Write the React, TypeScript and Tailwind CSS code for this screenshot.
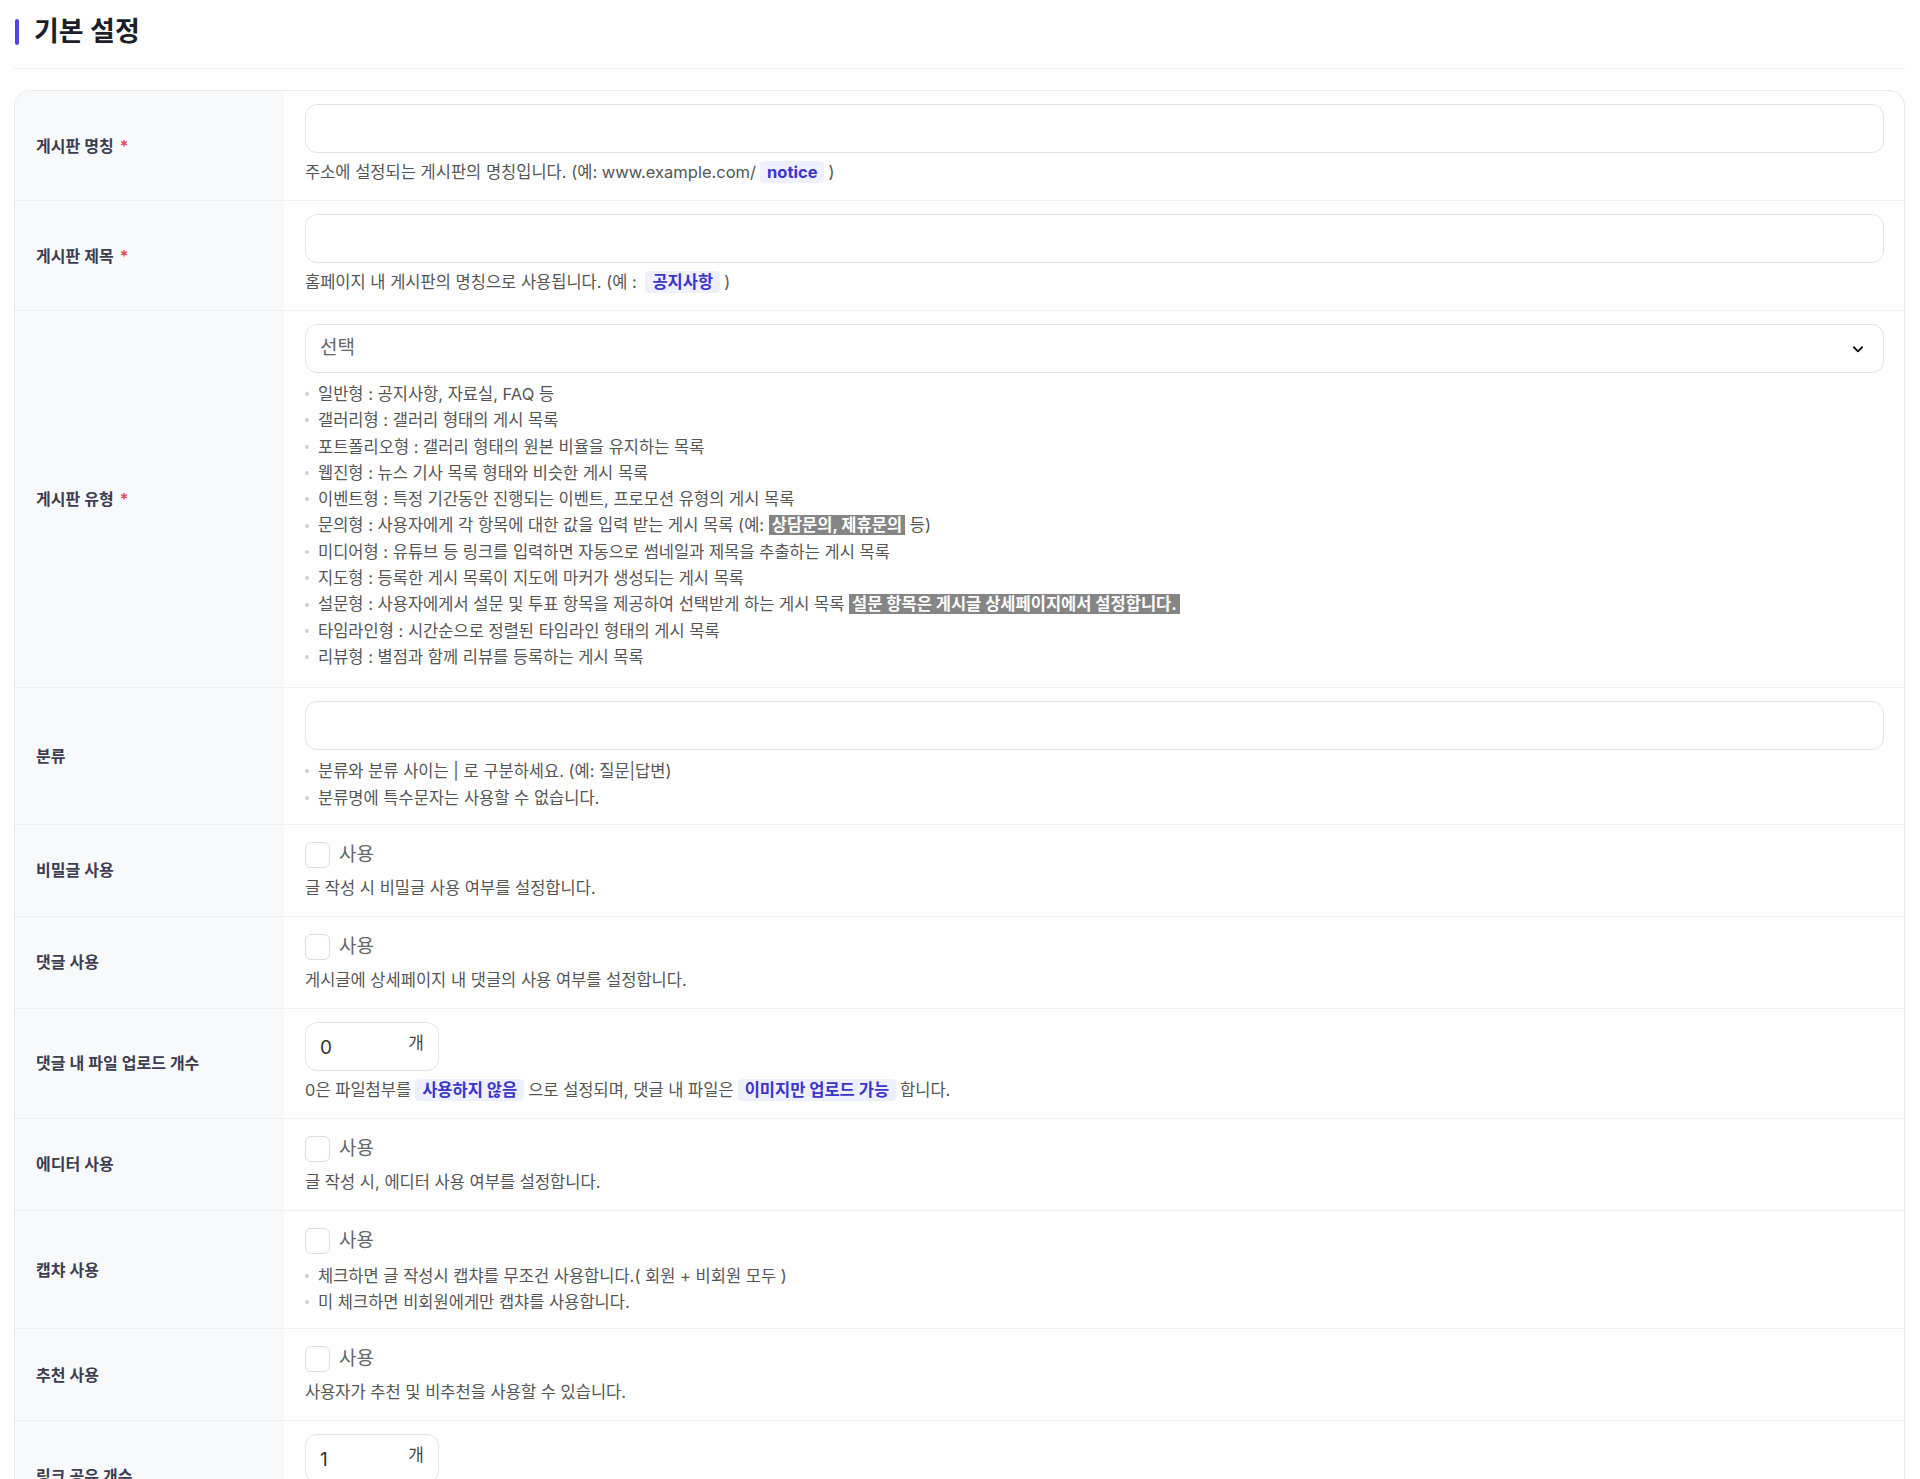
import React from 'react';

const font = { fontFamily: 'Inter, "Noto Sans CJK KR", sans-serif' };

function Required() {
  return <span className="ml-[6px] text-[#e5484d]">*</span>;
}

function Chip({ children }: { children: React.ReactNode }) {
  return (
    <span className="mx-1 inline-block rounded-[4px] bg-[#eef0ff] px-[7px] font-bold leading-[22px] text-[#3b35c9]">
      {children}
    </span>
  );
}

function Mark({ children }: { children: React.ReactNode }) {
  return (
    <span className="inline-block bg-[#858585] px-[3px] font-bold leading-[20px] text-white">{children}</span>
  );
}

function Bullets({ items }: { items: React.ReactNode[] }) {
  return (
    <ul className="flex flex-col">
      {items.map((item, i) => (
        <li key={i} className="flex items-center text-[16.5px] leading-[26.3px] text-[#555]">
          <span className="mr-[9px] h-[4px] w-[4px] shrink-0 rounded-full bg-[#cfcfcf]" />
          <span>{item}</span>
        </li>
      ))}
    </ul>
  );
}

function TextInput() {
  return <div className="h-[49px] w-full rounded-[12px] border border-[#e2e2e8] bg-white" />;
}

function Checkbox() {
  return (
    <label className="mt-[3px] flex h-[28px] items-center gap-[9px]">
      <span className="h-[26px] w-[25px] rounded-[6px] border border-[#dcdce2] bg-white" />
      <span className="text-[19px] text-[#666]">사용</span>
    </label>
  );
}

function NumberInput({ value }: { value: string }) {
  return (
    <div className="flex h-[49px] w-[134px] items-start justify-between rounded-[12px] border border-[#e2e2e8] bg-white pl-[14px] pr-[14px]">
      <span className="mt-[11px] text-[19px] text-[#333]">{value}</span>
      <span className="mt-[8px] text-[17px] text-[#444]">개</span>
    </div>
  );
}

function Help({ children }: { children: React.ReactNode }) {
  return <p className="text-[16.5px] leading-[22px] text-[#555]">{children}</p>;
}

function Row({
  label,
  required,
  children,
  last,
  pb = 'pb-[17px]',
}: {
  label: string;
  required?: boolean;
  children: React.ReactNode;
  last?: boolean;
  pb?: string;
}) {
  return (
    <div className={`grid grid-cols-[269px_1fr] ${last ? '' : 'border-b border-[#f0f0f3]'}`}>
      <div className="flex items-center bg-[#f8f9fb] pl-[21px] text-[16px] font-semibold text-[#3d3d52]">
        {label}
        {required && <Required />}
      </div>
      <div className={`flex flex-col gap-2 pl-[21px] pr-[20px] pt-[13px] ${pb}`}>{children}</div>
    </div>
  );
}

export default function App() {
  const boardTypes: React.ReactNode[] = [
    '일반형 : 공지사항, 자료실, FAQ 등',
    '갤러리형 : 갤러리 형태의 게시 목록',
    '포트폴리오형 : 갤러리 형태의 원본 비율을 유지하는 목록',
    '웹진형 : 뉴스 기사 목록 형태와 비슷한 게시 목록',
    '이벤트형 : 특정 기간동안 진행되는 이벤트, 프로모션 유형의 게시 목록',
    <>
      문의형 : 사용자에게 각 항목에 대한 값을 입력 받는 게시 목록 (예: <Mark>상담문의, 제휴문의</Mark> 등)
    </>,
    '미디어형 : 유튜브 등 링크를 입력하면 자동으로 썸네일과 제목을 추출하는 게시 목록',
    '지도형 : 등록한 게시 목록이 지도에 마커가 생성되는 게시 목록',
    <>
      설문형 : 사용자에게서 설문 및 투표 항목을 제공하여 선택받게 하는 게시 목록{' '}
      <Mark>설문 항목은 게시글 상세페이지에서 설정합니다.</Mark>
    </>,
    '타임라인형 : 시간순으로 정렬된 타임라인 형태의 게시 목록',
    '리뷰형 : 별점과 함께 리뷰를 등록하는 게시 목록',
  ];

  return (
    <div className="min-h-screen bg-white pl-[14px] pr-[15px]" style={font}>
      {/* Title */}
      <div className="flex h-[69px] items-center border-b border-[#efeff2] pb-[4px]">
        <span className="ml-[1px] h-[26px] w-[4px] rounded-full bg-[#4f46e5]" />
        <h1 className="ml-[15px] text-[27px] font-bold text-[#1d1d2b]">기본 설정</h1>
      </div>

      {/* Form card */}
      <div className="mt-[21px] overflow-hidden rounded-t-[16px] border border-b-0 border-[#e8e8ee]">
        <Row label="게시판 명칭" required>
          <TextInput />
          <Help>
            주소에 설정되는 게시판의 명칭입니다. (예: www.example.com/<Chip>notice</Chip>)
          </Help>
        </Row>

        <Row label="게시판 제목" required>
          <TextInput />
          <Help>
            홈페이지 내 게시판의 명칭으로 사용됩니다. (예 : <Chip>공지사항</Chip>)
          </Help>
        </Row>

        <Row label="게시판 유형" required>
          <div className="flex h-[49px] w-full items-center justify-between rounded-[12px] border border-[#e2e2e8] bg-white pl-[14px] pr-[18px]">
            <span className="text-[19px] text-[#666]">선택</span>
            <svg width="14" height="14" viewBox="0 0 24 24" fill="none" stroke="#111" strokeWidth="3.2" strokeLinecap="round" strokeLinejoin="round">
              <path d="M5 9l7 7 7-7" />
            </svg>
          </div>
          <Bullets items={boardTypes} />
        </Row>

        <Row label="분류" pb="pb-[13px]">
          <TextInput />
          <Bullets
            items={['분류와 분류 사이는 | 로 구분하세요. (예: 질문|답변)', '분류명에 특수문자는 사용할 수 없습니다.']}
          />
        </Row>

        <Row label="비밀글 사용">
          <Checkbox />
          <Help>글 작성 시 비밀글 사용 여부를 설정합니다.</Help>
        </Row>

        <Row label="댓글 사용">
          <Checkbox />
          <Help>게시글에 상세페이지 내 댓글의 사용 여부를 설정합니다.</Help>
        </Row>

        <Row label="댓글 내 파일 업로드 개수">
          <NumberInput value="0" />
          <Help>
            0은 파일첨부를<Chip>사용하지 않음</Chip>으로 설정되며, 댓글 내 파일은<Chip>이미지만 업로드 가능</Chip>합니다.
          </Help>
        </Row>

        <Row label="에디터 사용">
          <Checkbox />
          <Help>글 작성 시, 에디터 사용 여부를 설정합니다.</Help>
        </Row>

        <Row label="캡챠 사용" pb="pb-[13px]">
          <Checkbox />
          <Bullets
            items={['체크하면 글 작성시 캡챠를 무조건 사용합니다.( 회원 + 비회원 모두 )', '미 체크하면 비회원에게만 캡챠를 사용합니다.']}
          />
        </Row>

        <Row label="추천 사용">
          <Checkbox />
          <Help>사용자가 추천 및 비추천을 사용할 수 있습니다.</Help>
        </Row>

        <Row label="링크 공유 개수" last>
          <NumberInput value="1" />
          <Help>게시글 내 링크 공유 가능 개수를 설정합니다.</Help>
        </Row>
      </div>
    </div>
  );
}
